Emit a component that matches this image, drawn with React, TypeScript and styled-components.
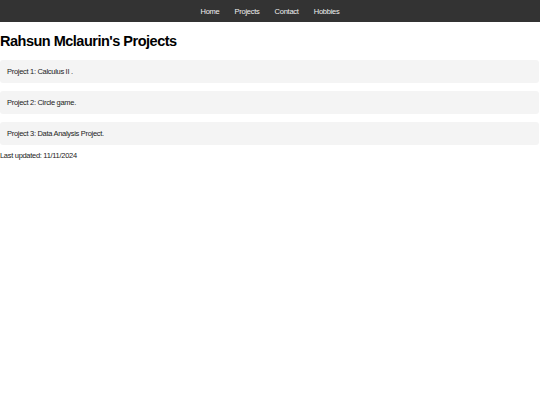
import React, { FC } from 'react';
import styled, { createGlobalStyle } from 'styled-components';

const Global = createGlobalStyle`
    html, body {
        margin: 0;
        padding: 0;
        background: #ffffff;
        font-family: "Liberation Sans", Arial, sans-serif;
        color: #222222;
    }
`;

const NavBar = styled.nav`
    height: 22px;
    background: #333333;
    display: flex;
    justify-content: center;
    align-items: center;
    gap: 15px;
`;

const NavLink = styled.a`
    color: #f0f0f0;
    font-size: 7.5px;
    letter-spacing: -0.25px;
    text-decoration: none;
`;

const Title = styled.h1`
    margin: 11px 0 11px;
    font-size: 14.5px;
    letter-spacing: -0.5px;
    font-weight: bold;
    line-height: 16px;
    color: #000000;
`;

const List = styled.div`
    display: flex;
    flex-direction: column;
    gap: 8px;
    margin-right: 1px;
`;

const Card = styled.div`
    background: #f4f4f4;
    border-radius: 3px;
    height: 23px;
    padding: 0 7px;
    display: flex;
    align-items: center;
    font-size: 7.5px;
    letter-spacing: -0.3px;
`;

const Footer = styled.p`
    margin: 6px 0 0;
    font-size: 7.5px;
    letter-spacing: -0.3px;
    line-height: 10px;
`;

const links = ['Home', 'Projects', 'Contact', 'Hobbies'];
const projects = ['Project 1: Calculus II .', 'Project 2: Circle game.', 'Project 3: Data Analysis Project.'];

const App: FC = () => {
    return (
        <>
            <Global />
            <NavBar>
                {links.map((l) => (
                    <NavLink key={l} href="#">
                        {l}
                    </NavLink>
                ))}
            </NavBar>
            <Title>Rahsun Mclaurin's Projects</Title>
            <List>
                {projects.map((p) => (
                    <Card key={p}>{p}</Card>
                ))}
            </List>
            <Footer>Last updated: 11/11/2024</Footer>
        </>
    );
};

export default App;
